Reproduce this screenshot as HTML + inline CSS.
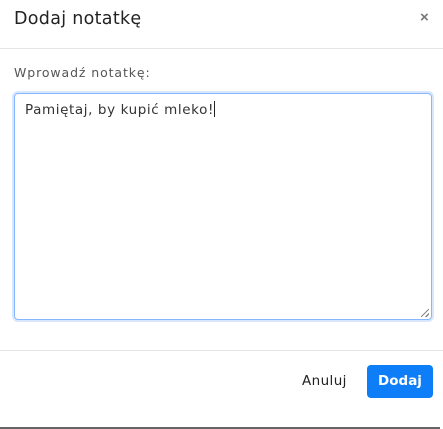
<!DOCTYPE html>
<html><head><style>
body{margin:0;width:443px;height:429px;background:#fff;position:relative;overflow:hidden;font-family:"DejaVu Sans",sans-serif;}
.t{position:absolute;left:14px;top:9px;font-size:17.5px;color:#222;letter-spacing:0.3px;}
.x{position:absolute;left:420px;top:9px;font-size:15px;color:#777;font-weight:bold;font-family:"Liberation Sans",sans-serif;}
.l1{position:absolute;left:0;right:0;top:48px;height:1px;background:#e3e5e8;}
.lab{position:absolute;left:14px;top:65px;font-size:12.5px;color:#555;letter-spacing:0.9px;}
.ta{position:absolute;left:14px;top:93px;width:416px;height:225px;border:1px solid #86b7fe;border-radius:4px;box-shadow:0 0 0 2px #d8e7fe;}
.tt{position:absolute;left:10px;top:7px;font-size:13.5px;color:#333;letter-spacing:0.6px;}
.cur{display:inline-block;width:1px;height:16px;background:#222;vertical-align:-3px;}
.grip{position:absolute;right:2px;bottom:2px;width:8px;height:8px;background:linear-gradient(135deg,transparent 45%,#888 45%,#888 55%,transparent 55%,transparent 75%,#888 75%,#888 85%,transparent 85%);}
.l2{position:absolute;left:0;right:0;top:350px;height:1px;background:#e3e5e8;}
.an{position:absolute;left:302px;top:373px;font-size:13.5px;color:#222;letter-spacing:0.4px;}
.btn{position:absolute;left:367px;top:365px;width:66px;height:33px;background:#0d7ef7;border-radius:4px;color:#fff;font-weight:bold;font-size:13.5px;text-align:center;line-height:33px;}
.l3{position:absolute;left:0;width:440px;top:427px;height:2px;background:#666;}
</style></head><body>
<div class="t">Dodaj notatkę</div>
<div class="x">×</div>
<div class="l1"></div>
<div class="lab">Wprowadź notatkę:</div>
<div class="ta"><div class="tt">Pamiętaj, by kupić mleko!<span class="cur"></span></div><div class="grip"></div></div>
<div class="l2"></div>
<div class="an">Anuluj</div>
<div class="btn">Dodaj</div>
<div class="l3"></div>
</body></html>
